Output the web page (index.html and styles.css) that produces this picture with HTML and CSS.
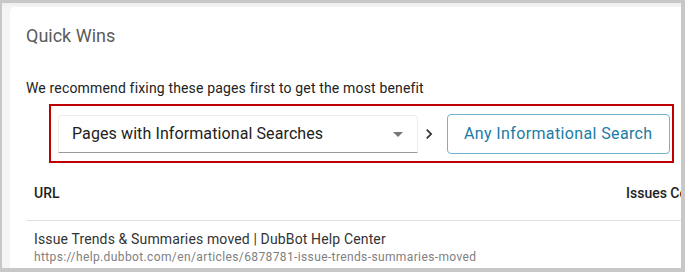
FILE: index.html
```html
<!DOCTYPE html>
<html>
<head>
<meta charset="utf-8">
<link rel="stylesheet" href="styles.css">
</head>
<body>
<div class="frame">
  <div class="card">
    <h2 class="title">Quick Wins</h2>
    <p class="intro">We recommend fixing these pages first to get the most benefit</p>
    <div class="filters">
      <div class="select">
        <span class="select-text">Pages with Informational Searches</span>
        <span class="arrow"></span>
      </div>
      <svg class="chevron" width="20" height="20" viewBox="0 0 24 24"><path d="M8.59 16.59L13.17 12 8.59 7.41 10 6l6 6-6 6z" fill="#333"/></svg>
      <button class="btn">Any Informational Search</button>
    </div>
    <div class="table">
      <div class="thead">
        <div class="th th-url">URL</div>
        <div class="th th-issues">Issues Count</div>
      </div>
      <div class="row">
        <div class="cell-url">
          <div class="page-title">Issue Trends &amp; Summaries moved | DubBot Help Center</div>
          <div class="page-url">https://help.dubbot.com/en/articles/6878781-issue-trends-summaries-moved</div>
        </div>
      </div>
    </div>
  </div>
</div>
</body>
</html>
```

FILE: styles.css
```css
html, body {
  margin: 0;
  padding: 0;
}
body {
  background: #c8c8c8;
  font-family: Roboto, "Liberation Sans", sans-serif;
  width: 685px;
  height: 272px;
  overflow: hidden;
}
.frame {
  margin: 3px 4px 0 2px;
  height: 265px;
  background: linear-gradient(#ededed, #f5f5f5 4px);
  padding: 4px 0 0 8px;
  box-sizing: border-box;
  overflow: hidden;
}
.card {
  background: #fff;
  border-radius: 5px 0 0 0;
  height: 100%;
  padding: 17px 0 0 16px;
  box-sizing: border-box;
  overflow: hidden;
}
.title {
  margin: 0;
  font-size: 18px;
  font-weight: 400;
  line-height: 24px;
  color: #5b5b5b;
}
.intro {
  margin: 30px 0 0 0;
  font-size: 14px;
  line-height: 20px;
  letter-spacing: 0.16px;
  color: #222;
}
.filters {
  margin: 6px 0 0 23px;
  width: 625px;
  height: 59px;
  box-sizing: border-box;
  border: 2px solid #c00000;
  display: flex;
  align-items: center;
  padding-left: 7px;
}
.select {
  width: 360px;
  height: 38px;
  box-sizing: border-box;
  border: 1px solid #ececec;
  border-bottom: 1px solid #999;
  border-radius: 4px 4px 0 0;
  display: flex;
  align-items: center;
  padding: 0 14px 0 13px;
  background: #fff;
}
.select-text {
  flex: 1;
  font-size: 16px;
  letter-spacing: 0.1px;
  color: #222;
  white-space: nowrap;
}
.arrow {
  width: 0;
  height: 0;
  border-left: 5px solid transparent;
  border-right: 5px solid transparent;
  border-top: 5px solid #777;
  margin-top: 1px;
}
.chevron {
  margin-left: 1px;
  flex: none;
}
.btn {
  margin-left: 8px;
  height: 40px;
  padding: 0 16px;
  border: 1px solid #70b2cf;
  border-radius: 4px;
  background: #fff;
  color: #1b7ba6;
  font-family: Roboto, "Liberation Sans", sans-serif;
  font-size: 16px;
  letter-spacing: 0.37px;
  white-space: nowrap;
}
.table {
  width: 720px;
  margin-top: 22px;
}
.thead {
  display: flex;
  border-bottom: 1px solid #e0e0e0;
  padding-bottom: 19px;
}
.th {
  font-size: 14px;
  font-weight: 500;
  line-height: 16px;
  color: #1e1e1e;
  padding: 0 8px;
  white-space: nowrap;
}
.th-url {
  width: 576px;
}
.row {
  padding: 8px 8px 0;
}
.page-title {
  font-size: 14px;
  line-height: 20px;
  letter-spacing: 0.14px;
  color: #333;
}
.page-url {
  font-size: 12px;
  line-height: 16px;
  letter-spacing: 0.38px;
  color: #808080;
}
```
